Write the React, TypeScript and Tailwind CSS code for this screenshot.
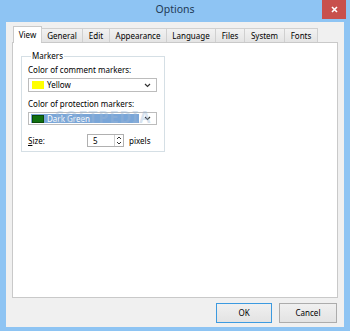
import React from "react";

const font = { fontFamily: '"Noto Sans", "Open Sans", sans-serif' };

function Chevron() {
  return (
    <svg width="7" height="5" viewBox="0 0 7 5" className="shrink-0">
      <path d="M1 1 L3.5 3.5 L6 1" fill="none" stroke="#333" strokeWidth="1.2" />
    </svg>
  );
}

const tabs: [string, number][] = [
  ["View", 29],
  ["General", 41],
  ["Edit", 27],
  ["Appearance", 57],
  ["Language", 49],
  ["Files", 29],
  ["System", 40],
  ["Fonts", 33],
];

export default function App() {
  return (
    <div className="w-[350px] h-[331px] bg-[#8ec4f3] flex flex-col text-[8px] text-black" style={font}>
      {/* title bar */}
      <div className="h-[22px] flex items-start shrink-0">
        <div className="w-[60px]" />
        <div className="flex-1 text-center text-[10.5px] leading-[18px] text-[#1e3a56]">Options</div>
        <div className="w-[60px] flex justify-end pr-[4px]">
          <div className="w-[24px] h-[19px] bg-[#c8504c] flex items-center justify-center">
            <svg width="7" height="7" viewBox="0 0 7 7">
              <path d="M1 1 L6 6 M6 1 L1 6" stroke="#fff" strokeWidth="1.6" />
            </svg>
          </div>
        </div>
      </div>
      {/* client */}
      <div className="flex-1 mx-[6px] mb-[4px] bg-[#f0f0f0] flex flex-col pl-[6px] pr-[6px] pt-[4px]">
        {/* tabs */}
        <div className="flex items-start h-[16px] pl-[1px] relative z-10">
          {tabs.map(([t, w], i) =>
            i === 0 ? (
              <div
                key={t}
                style={{ width: w }}
                className="h-[17px] shrink-0 bg-white border border-b-0 border-[#c9c9c9] flex items-center justify-center leading-none"
              >
                {t}
              </div>
            ) : (
              <div
                key={t}
                style={{ width: w + 1 }}
                className="h-[14px] mt-[2px] shrink-0 -ml-[1px] bg-gradient-to-b from-[#f2f2f2] to-[#e4e4e4] border border-b-0 border-[#d0d0d0] flex items-center justify-center leading-none"
              >
                {t}
              </div>
            )
          )}
        </div>
        {/* panel */}
        <div className="h-[256px] bg-white border border-[#c9c9c9] pt-[7px] pl-[8px]">
          <fieldset className="w-[144px] border border-[#d5dfe5] px-[6px] pb-[4px]">
            <legend className="ml-[3px] px-[1px] leading-[12px]">Markers</legend>
            <div className="leading-[12px] mt-[2px]">Color of comment markers:</div>
            <div className="mt-[2px] h-[14px] w-[129px] border border-[#bcbcbc] flex items-center pl-[3px] pr-[5px]">
              <div className="w-[12px] h-[8px] bg-[#ffff00]" />
              <span className="ml-[3px] flex-1 leading-none">Yellow</span>
              <Chevron />
            </div>
            <div className="mt-[6px] leading-[12px]">Color of protection markers:</div>
            <div className="mt-[2px] h-[13px] w-[129px] border border-[#bcbcbc] flex items-center pl-[2px] pr-[5px] relative">
              <div className="flex-1 h-[9px] flex items-center bg-[#7aa6d8] pl-[1px]">
                <div className="w-[12px] h-[8px] bg-[#107010] border border-[#0a4a0a]" />
                <span className="ml-[3px] leading-none text-white">Dark Green</span>
              </div>
              <div className="w-[12px] flex justify-end">
                <Chevron />
              </div>
              <span className="absolute left-[26px] top-[-4px] text-[16px] font-bold tracking-[1px] text-[#9bb7d6] opacity-40 leading-none pointer-events-none">
                SOFTPEDIA
              </span>
            </div>
            <div className="mt-[9px] flex items-center h-[13px]">
              <span className="w-[59px] leading-none">
                <span className="underline">S</span>ize:
              </span>
              <div className="w-[37px] h-[13px] border border-[#b0b0b0] flex items-center">
                <span className="flex-1 pl-[5px] leading-none">5</span>
                <div className="w-[9px] h-full flex flex-col border-l border-[#d0d0d0] items-center justify-center">
                  <svg width="6" height="11" viewBox="0 0 6 11">
                    <path d="M1 4 L3 2 L5 4" fill="none" stroke="#333" strokeWidth="1" />
                    <path d="M1 7 L3 9 L5 7" fill="none" stroke="#333" strokeWidth="1" />
                  </svg>
                </div>
              </div>
              <span className="ml-[5px] leading-none">pixels</span>
            </div>
          </fieldset>
        </div>
        {/* buttons */}
        <div className="flex justify-end gap-[7px] mt-[5px] pr-[1px]">
          <button className="w-[56px] h-[20px] border border-[#3c9ae0] bg-gradient-to-b from-[#f0f0f0] to-[#e3e3e3] leading-none">
            OK
          </button>
          <button className="w-[58px] h-[20px] border border-[#acacac] bg-gradient-to-b from-[#f0f0f0] to-[#e3e3e3] leading-none">
            Cancel
          </button>
        </div>
      </div>
    </div>
  );
}
